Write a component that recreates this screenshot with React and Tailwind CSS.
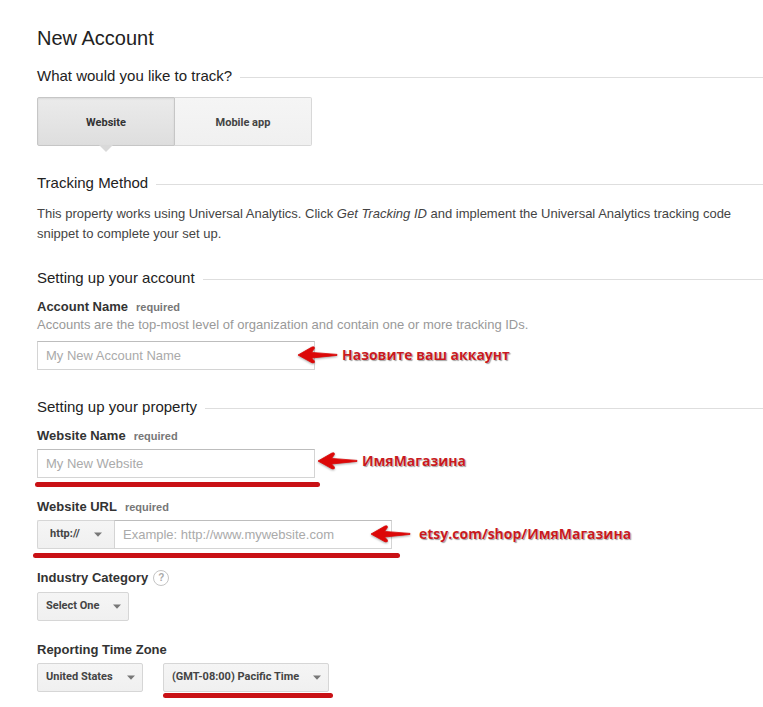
import React from 'react';

function Section({ title, children, className = '' }) {
  return (
    <section className={className}>
      <h2 className="flex items-center gap-2 text-[15px] leading-5 text-[#222]">
        {title}
        <span className="mt-0.5 h-px flex-1 bg-[#dedede]" />
      </h2>
      {children}
    </section>
  );
}

function Label({ htmlFor, children, required }) {
  return (
    <div className="flex items-baseline gap-2 leading-[18px]">
      <label htmlFor={htmlFor} className="text-[13px] font-bold text-[#333]">{children}</label>
      {required && <span className="text-[11px] font-bold text-[#777]">required</span>}
    </div>
  );
}

function Dropdown({ id, label, value, width, inset = 'pl-2', shape = 'rounded-xs', caret = 'right-2' }) {
  return (
    <div className={`relative ${width}`}>
      <select
        id={id}
        aria-label={label}
        className={`h-[29px] w-full appearance-none border border-[#d6d6d6] bg-linear-to-b from-[#f5f5f5] to-[#f0f0f0] font-[Roboto,sans-serif] text-[11px] font-bold text-[#444] ${inset} ${shape}`}
      >
        <option>{value}</option>
      </select>
      <svg className={`pointer-events-none absolute top-3 ${caret}`} width="8" height="5" viewBox="0 0 8 5" aria-hidden="true">
        <path d="M0 0.5h8L4 4.8z" fill="#777" />
      </svg>
    </div>
  );
}

function TextBox({ id, placeholder, className }) {
  return (
    <input
      id={id}
      type="text"
      placeholder={placeholder}
      className={`h-[29px] border border-[#d4d4d4] border-t-[#bdbdbd] bg-white px-2 text-[13px] text-[#333] placeholder:text-[#aaa] ${className}`}
    />
  );
}

function Note({ children, className }) {
  return (
    <div className={`absolute flex items-center whitespace-nowrap ${className}`}>
      <svg width="40" height="20" viewBox="0 0 40 20" aria-hidden="true" className="drop-shadow-[0_1px_1px_rgba(0,0,0,0.35)]">
        <path d="M0 10 L14 2 Q17 1 16.4 3.6 L13.6 7.4 L39 9.4 V10.4 L13.6 13 L16.4 16 Q17.2 18.6 14 17.8Z" fill="#dc0808" stroke="#dc0808" strokeWidth="0.8" strokeLinejoin="round" />
      </svg>
      <span className="font-['Open_Sans','Noto_Sans',sans-serif] text-[14px] leading-5 font-bold text-[#c81a1e] [text-shadow:0_0_1px_#fff,1px_1px_1px_#999]">
        {children}
      </span>
    </div>
  );
}

function Stroke({ className }) {
  return <span className={`absolute h-[5px] rounded-full bg-[#c91115] ${className}`} />;
}

export default function App() {
  return (
    <main className="bg-white pt-[26px] pb-4 pl-[37px] font-['Liberation_Sans',Arial,sans-serif] text-[13px] text-[#444]">
      <h1 className="text-xl leading-6 text-[#222]">New Account</h1>

      <Section title="What would you like to track?" className="mt-4">
        <div className="mt-[11px] flex h-[49px] w-[275px] font-[Roboto,sans-serif] text-[11px] font-bold text-[#444]">
          <button type="button" className="relative flex-1 rounded-l-xs border border-[#c6c6c6] bg-linear-to-b from-[#ebebeb] to-[#dedede] pt-1 text-[#333] shadow-[inset_0_1px_2px_rgba(0,0,0,0.08)]">
            Website
            <svg className="absolute top-full left-1/2 -translate-x-1/2" width="14" height="7" viewBox="0 0 14 7" aria-hidden="true">
              <path d="M0 0h14L7 7z" fill="#d9d9d9" />
            </svg>
          </button>
          <button type="button" className="flex-1 rounded-r-xs border border-l-0 border-[#d8d8d8] bg-linear-to-b from-[#f5f5f5] to-[#f0f0f0] pt-1">
            Mobile app
          </button>
        </div>
      </Section>

      <Section title="Tracking Method" className="mt-[27px]">
        <p className="mt-[11px] pr-3 leading-5">
          This property works using Universal Analytics. Click <em>Get Tracking ID</em> and implement the Universal Analytics tracking code snippet to complete your set up.
        </p>
      </Section>

      <Section title="Setting up your account" className="mt-6">
        <div className="mt-2.5">
          <Label htmlFor="account" required>Account Name</Label>
          <p className="leading-[18px] text-[#999]">Accounts are the top-most level of organization and contain one or more tracking IDs.</p>
          <div className="relative mt-[7px] flex">
            <TextBox id="account" placeholder="My New Account Name" className="w-[278px]" />
            <Note className="top-1 left-[261px] gap-1">Назовите ваш аккаунт</Note>
          </div>
        </div>
      </Section>

      <Section title="Setting up your property" className="mt-[27px]">
        <div className="mt-2.5">
          <Label htmlFor="site" required>Website Name</Label>
          <div className="relative mt-1 flex">
            <TextBox id="site" placeholder="My New Website" className="w-[278px]" />
            <Note className="top-0.5 left-[281px] gap-1">ИмяМагазина</Note>
            <Stroke className="top-[33px] -left-0.5 w-[285px]" />
          </div>
        </div>
        <div className="mt-5">
          <Label htmlFor="url" required>Website URL</Label>
          <div className="relative mt-1 flex">
            <Dropdown id="protocol" label="Protocol" value="http://" width="w-[77px]" inset="pl-3" shape="rounded-l-xs border-r-0" caret="right-3" />
            <TextBox id="url" placeholder="Example: http://www.mywebsite.com" className="w-[278px]" />
            <Note className="top-1 left-[334px] gap-2">etsy.com/shop/ИмяМагазина</Note>
            <Stroke className="top-[33px] -left-1 w-[367px]" />
          </div>
        </div>
        <div className="mt-5">
          <div className="flex items-center gap-1.5">
            <Label htmlFor="industry">Industry Category</Label>
            <button type="button" aria-label="Help" className="my-[2px] size-3.5 rounded-full text-[10px] leading-3.5 font-bold text-[#aaa] outline outline-[#c4c4c4]">?</button>
          </div>
          <div className="mt-[5px]">
            <Dropdown id="industry" value="Select One" width="w-[92px]" />
          </div>
        </div>
        <div className="mt-5">
          <Label htmlFor="country">Reporting Time Zone</Label>
          <div className="mt-1 flex gap-5">
            <Dropdown id="country" value="United States" width="w-[106px]" />
            <div className="relative">
              <Dropdown id="zone" label="Time zone" value="(GMT-08:00) Pacific Time" width="w-[166px]" />
              <Stroke className="top-[30px] left-0 w-[170px]" />
            </div>
          </div>
        </div>
      </Section>
    </main>
  );
}
